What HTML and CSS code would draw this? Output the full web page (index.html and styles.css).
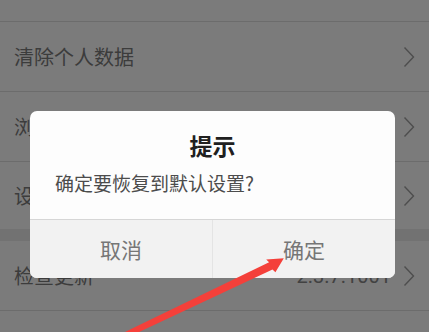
FILE: index.html
```html
<!DOCTYPE html>
<html lang="zh-CN">
<head>
<meta charset="utf-8">
<link rel="stylesheet" href="styles.css">
</head>
<body>
<div class="screen">
  <div class="list">
    <div class="row"><span class="label">清除缓存</span><svg class="chev" viewBox="0 0 12 22"><path d="M1.5 1.5 L10.5 11 L1.5 20.5"/></svg></div>
    <div class="row"><span class="label">清除个人数据</span><svg class="chev" viewBox="0 0 12 22"><path d="M1.5 1.5 L10.5 11 L1.5 20.5"/></svg></div>
    <div class="row"><span class="label">浏览器标识</span><svg class="chev" viewBox="0 0 12 22"><path d="M1.5 1.5 L10.5 11 L1.5 20.5"/></svg></div>
    <div class="row row-last"><span class="label">设置默认浏览器</span><svg class="chev" viewBox="0 0 12 22"><path d="M1.5 1.5 L10.5 11 L1.5 20.5"/></svg></div>
    <div class="band"></div>
    <div class="row"><span class="label">检查更新</span><span class="value">2.3.7.1001</span><svg class="chev" viewBox="0 0 12 22"><path d="M1.5 1.5 L10.5 11 L1.5 20.5"/></svg></div>
  </div>

  <div class="dialog">
    <div class="dialog-body">
      <div class="title">提示</div>
      <div class="message">确定要恢复到默认设置?</div>
    </div>
    <div class="actions">
      <div class="btn">取消</div>
      <div class="btn btn-right">确定</div>
    </div>
  </div>

  <svg class="arrow" viewBox="0 0 429 332" width="429" height="332">
    <polygon points="123.7,332.6 269.1,262.2 266.2,259.6 283.8,258.2 275.4,272.2 272.5,269.4 126.3,338"/>
  </svg>
</div>
</body>
</html>
```

FILE: styles.css
```css
html, body {
  margin: 0;
  padding: 0;
}
body {
  background: #7b7b7b;
  font-family: "Noto Sans CJK SC", "Noto Sans", sans-serif;
  width: 429px;
  height: 332px;
  overflow: hidden;
}
.screen {
  position: relative;
  width: 429px;
  height: 332px;
  overflow: hidden;
}
.list {
  display: flex;
  flex-direction: column;
  margin-top: -48px;
}
.row {
  display: flex;
  align-items: center;
  height: 70px;
  box-sizing: border-box;
  border-bottom: 1px solid #6c6c6c;
  padding: 0 14px 0 14px;
}
.row-last {
  height: 67px;
  border-bottom: none;
}
.band {
  height: 12px;
  background: #727272;
}
.label {
  flex: 1;
  font-size: 20px;
  color: #3c3c3c;
  line-height: 26px;
}
.value {
  font-family: Roboto, "Noto Sans", sans-serif;
  font-size: 20px;
  color: #424242;
  margin-right: 12px;
}
.chev {
  width: 12px;
  height: 22px;
  fill: none;
  stroke: #4e4e4e;
  stroke-width: 1.4;
}
.dialog {
  position: absolute;
  left: 30px;
  top: 111px;
  width: 365px;
  height: 167px;
  border-radius: 7px;
  overflow: hidden;
  background: #fdfdfd;
  display: flex;
  flex-direction: column;
}
.dialog-body {
  height: 109px;
  box-sizing: border-box;
  padding: 18px 25px 0 25px;
  border-bottom: 1px solid #d6d6d6;
}
.title {
  text-align: center;
  font-size: 23px;
  font-weight: bold;
  color: #202020;
  line-height: 32px;
}
.message {
  margin-top: 9px;
  font-size: 19px;
  color: #4c4c4c;
  line-height: 26px;
}
.actions {
  flex: 1;
  display: flex;
  background: #f2f2f2;
}
.btn {
  flex: 1;
  display: flex;
  align-items: center;
  justify-content: center;
  font-size: 21px;
  color: #767676;
}
.btn-right {
  border-left: 1px solid #e4e4e4;
}
.arrow {
  position: absolute;
  left: 0;
  top: 0;
}
.arrow polygon {
  fill: #f4403a;
}
```
